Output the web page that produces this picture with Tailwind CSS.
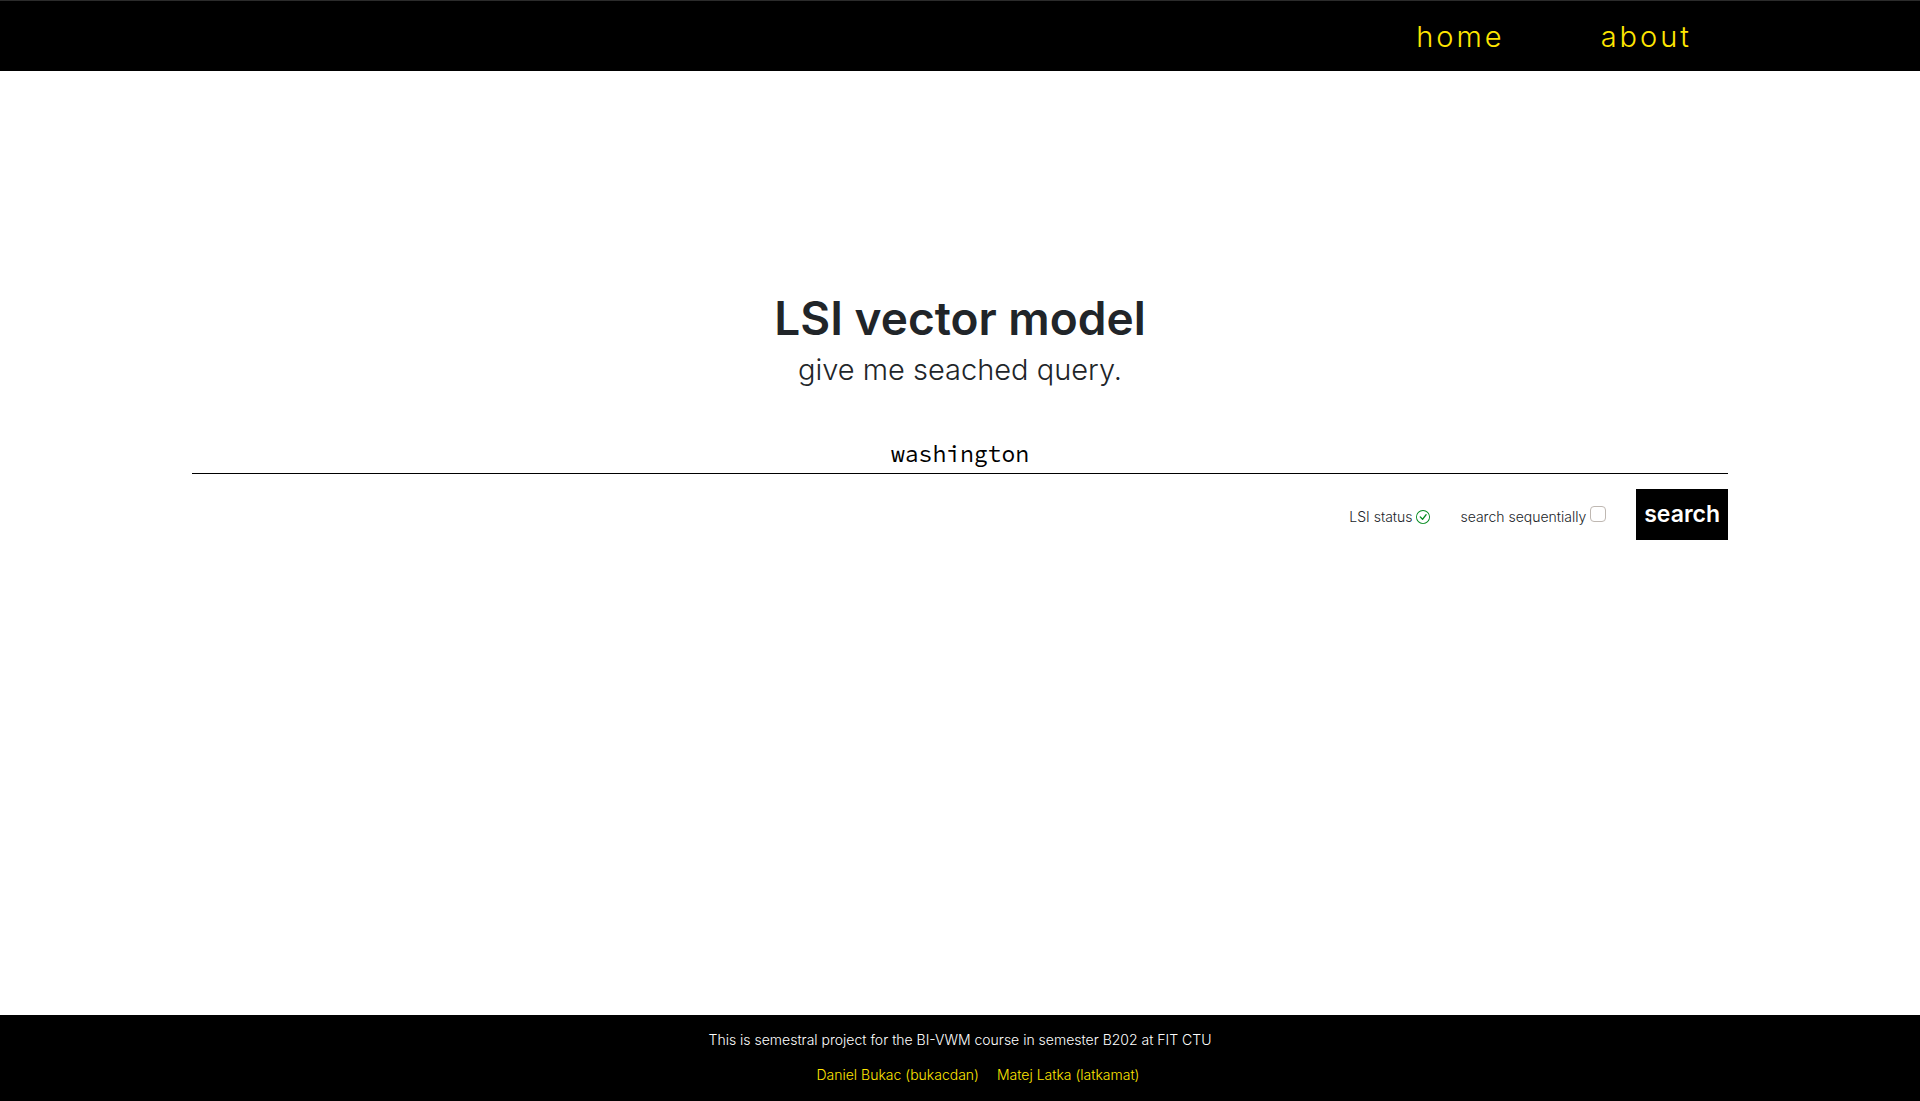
<!DOCTYPE html>
<html lang="en">
<head>
<meta charset="utf-8">
<title>LSI vector model</title>
<script src="https://cdn.jsdelivr.net/npm/@tailwindcss/browser@4"></script>
</head>
<body class="flex min-h-screen flex-col bg-white font-['Inter',sans-serif] font-light text-[#212529]">
<header class="border-t border-[#2b2b2b] bg-black px-[10%] pt-3 pb-2.5">
<nav class="flex justify-end gap-24 pr-9 text-[29px] leading-12 tracking-[3px] text-[#ffe600]">
<a href="#home">home</a>
<a href="#about">about</a>
</nav>
</header>
<main class="grow px-[10%] pt-[219px]">
<h1 class="text-center text-[46px] leading-14 font-semibold">LSI vector model</h1>
<p class="mt-0.5 text-center text-[29px] leading-11">give me seached query.</p>
<form class="mt-10">
<input type="text" aria-label="Query" value="washington" class="block w-full border-b border-black pt-1.5 pb-[3px] text-center font-['Source_Code_Pro','Noto_Sans_Mono','DejaVu_Sans_Mono',monospace] text-[23px] leading-8 font-normal text-black outline-none">
<div class="mt-[15px] flex items-baseline justify-end text-sm">
<span>LSI status
<svg class="inline size-[14px] align-[-2px] text-[#008a1c]" viewBox="0 0 16 16" fill="currentColor" aria-hidden="true"><path d="M8 15A7 7 0 1 1 8 1a7 7 0 0 1 0 14zm0 1A8 8 0 1 0 8 0a8 8 0 0 0 0 16z"/><path d="M10.97 4.97a.235.235 0 0 0-.02.022L7.477 9.417 5.384 7.323a.75.75 0 0 0-1.06 1.06L6.97 11.03a.75.75 0 0 0 1.079-.02l3.992-4.99a.75.75 0 0 0-1.071-1.05z"/></svg></span>
<label class="ml-[30px]">search sequentially
<input type="checkbox" class="inline-block size-4 appearance-none rounded-sm border border-[#bfb8b2] bg-white align-baseline"></label>
<button type="button" class="ml-[30px] bg-black p-2 text-[23px] leading-[35px] font-semibold text-white">search</button>
</div>
</form>
</main>
<footer class="bg-black pt-3.5 pb-[15px] text-center text-sm leading-[22px] text-white">
<p>This is semestral project for the BI-VWM course in semester B202 at FIT CTU</p>
<p class="mt-[13px] flex justify-center gap-[18px] pl-9 text-[#ffe600]"><a href="#bukacdan">Daniel Bukac (bukacdan)</a><a href="#latkamat">Matej Latka (latkamat)</a></p>
</footer>
</body>
</html>
